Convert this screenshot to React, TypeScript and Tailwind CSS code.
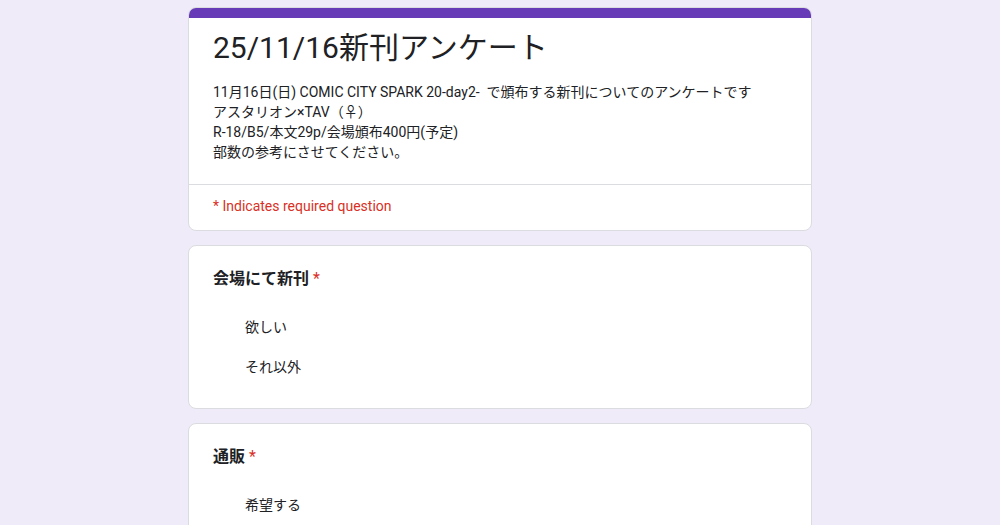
const font = { fontFamily: 'Roboto, "Noto Sans CJK JP", sans-serif' };

function Question({ title, options }: { title: string; options: string[] }) {
  return (
    <div className="mt-[14px] rounded-lg border border-[#dadce0] bg-white px-6 pt-[21px] pb-[21px]">
      <div className="text-base leading-6 font-bold text-[#202124]">
        {title}
        <span className="ml-1 font-normal text-[#d93025]">*</span>
      </div>
      <div className="mt-4 flex flex-col">
        {options.map((o) => (
          <div key={o} className="flex h-10 items-center pl-8 text-sm text-[#202124]">
            {o}
          </div>
        ))}
      </div>
    </div>
  );
}

export default function App() {
  return (
    <div className="min-h-screen w-full bg-[#f0ebf8]" style={font}>
      <div className="mx-auto w-[624px] pt-[7px] pb-10">
        {/* Header card */}
        <div className="overflow-hidden rounded-lg border border-[#dadce0] bg-white">
          <div className="h-[10px] bg-[#673ab7]" />
          <div className="px-6 pt-[10px] pb-[22px]">
            <h1 className="text-[30px] leading-10 text-[#202124]">25/11/16新刊アンケート</h1>
            <div className="mt-[14px] text-sm leading-5 text-[#202124]">
              <p>11月16日(日) COMIC CITY SPARK 20-day2-&nbsp; で頒布する新刊についてのアンケートです</p>
              <p>アスタリオン×TAV（♀）</p>
              <p>R-18/B5/本文29p/会場頒布400円(予定)</p>
              <p>部数の参考にさせてください。</p>
            </div>
          </div>
          <div className="border-t border-[#dadce0] px-6 pt-[11px] pb-[14px] text-sm leading-5 text-[#d93025]">
            * Indicates required question
          </div>
        </div>

        <Question title="会場にて新刊" options={['欲しい', 'それ以外']} />
        <Question title="通販" options={['希望する']} />
      </div>
    </div>
  );
}
